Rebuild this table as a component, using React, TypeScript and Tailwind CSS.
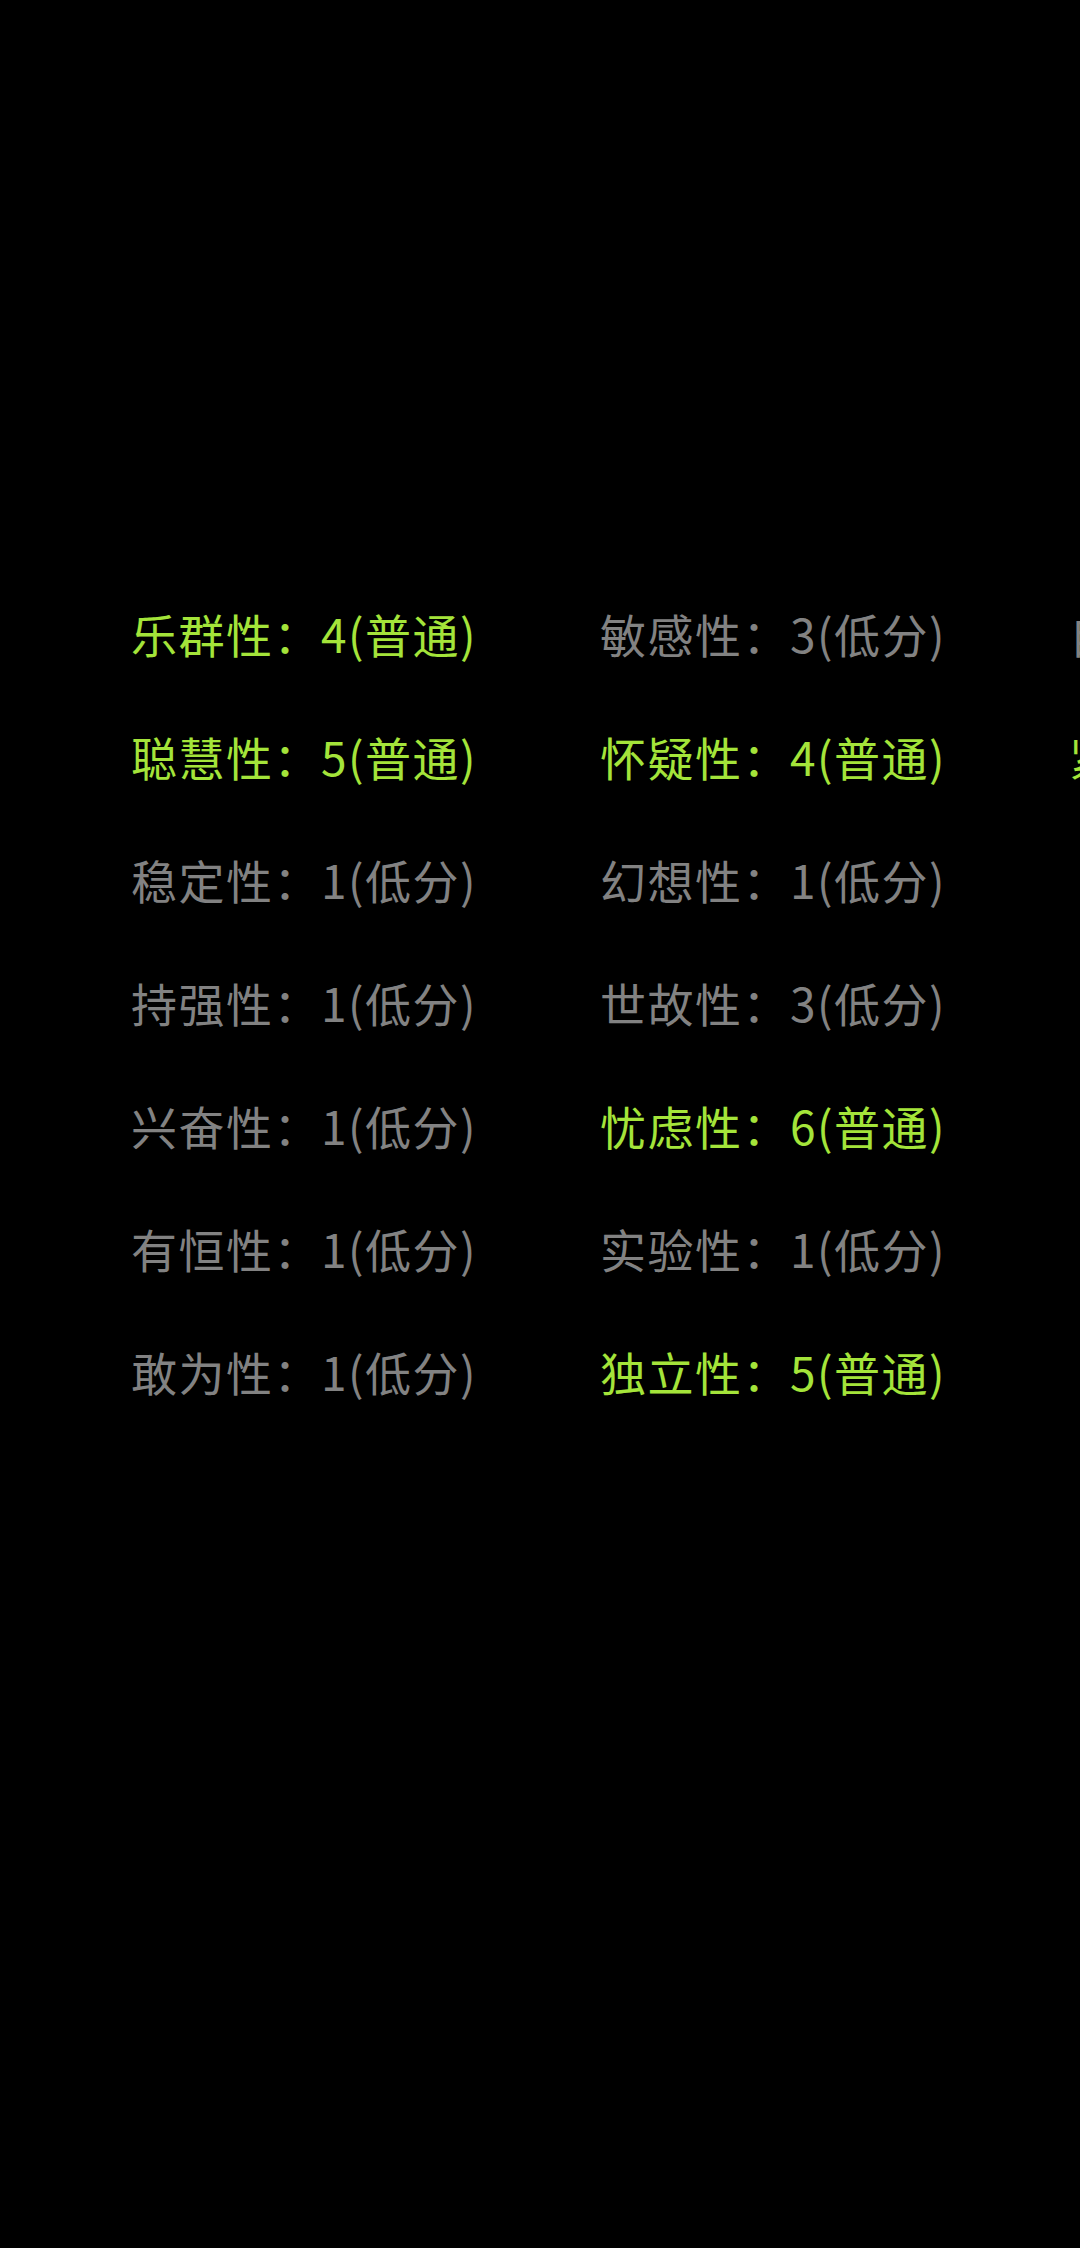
const factors = [
  { name: "乐群性", score: 4 },
  { name: "聪慧性", score: 5 },
  { name: "稳定性", score: 1 },
  { name: "持强性", score: 1 },
  { name: "兴奋性", score: 1 },
  { name: "有恒性", score: 1 },
  { name: "敢为性", score: 1 },
  { name: "敏感性", score: 3 },
  { name: "怀疑性", score: 4 },
  { name: "幻想性", score: 1 },
  { name: "世故性", score: 3 },
  { name: "忧虑性", score: 6 },
  { name: "实验性", score: 1 },
  { name: "独立性", score: 5 },
  { name: "自律性", score: 3 },
  { name: "紧张性", score: 4 },
];

const level = (n: number) => (n <= 3 ? "低分" : n <= 7 ? "普通" : "高分");

export default function App() {
  const columns = [factors.slice(0, 7), factors.slice(7, 14), factors.slice(14)];
  return (
    <div
      className="w-[1080px] h-[2248px] bg-black overflow-hidden"
      style={{ fontFamily: '"Noto Sans CJK SC", "Noto Sans", sans-serif' }}
    >
      <div className="flex pt-[572px] pl-[131px]">
        {columns.map((col, i) => (
          <div key={i} className="w-[469px] shrink-0 flex flex-col">
            {col.map((f) => {
              const normal = f.score > 3;
              return (
                <div
                  key={f.name}
                  className={`h-[123px] flex items-center whitespace-nowrap text-[46px] tracking-[1.5px] ${
                    normal ? "text-[#a4e43a]" : "text-[#828282]"
                  }`}
                >
                  {f.name}：{f.score}({level(f.score)})
                </div>
              );
            })}
          </div>
        ))}
      </div>
    </div>
  );
}
